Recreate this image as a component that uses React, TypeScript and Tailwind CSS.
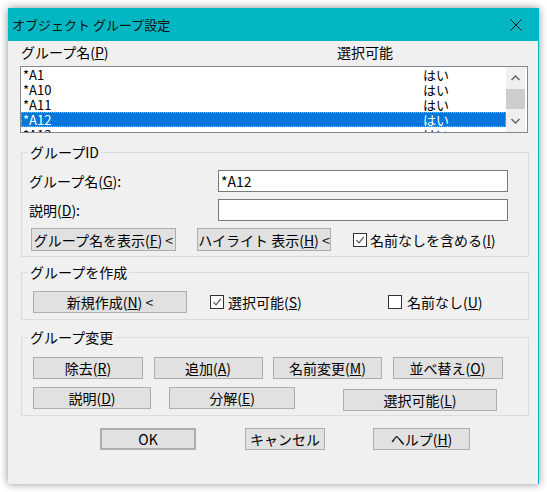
import type { ReactNode } from 'react';

const rows = [
  { name: '*A1', sel: 'はい' },
  { name: '*A10', sel: 'はい' },
  { name: '*A11', sel: 'はい' },
  { name: '*A12', sel: 'はい', active: true },
  { name: '*A13', sel: 'はい' },
];

function Btn({ children, className = '' }: { children: ReactNode; className?: string }) {
  return (
    <div
      className={`flex items-center justify-center whitespace-nowrap bg-[#e1e1e1] border border-[#adadad] text-[14px] leading-[16px] ${className}`}
    >
      {children}
    </div>
  );
}

function Check({ checked }: { checked: boolean }) {
  return (
    <div className="w-[14px] h-[14px] shrink-0 bg-white border border-[#333333] flex items-center justify-center">
      {checked && (
        <svg width="10" height="10" viewBox="0 0 10 10">
          <path d="M1.5 5.2 L4 7.8 L8.8 1.8" fill="none" stroke="#555555" strokeWidth="1.2" />
        </svg>
      )}
    </div>
  );
}

function Group({ title, children, className = '' }: { title: string; children: ReactNode; className?: string }) {
  return (
    <fieldset className={`ml-[1px] w-[508px] border border-[#dcdcdc] p-0 ${className}`}>
      <legend className="ml-[6px] px-[2px] text-[14px] leading-[16px]">{title}</legend>
      {children}
    </fieldset>
  );
}

export default function App() {
  return (
    <div className="w-[547px] h-[492px] bg-white pt-[8px] pl-[8px] font-['Noto_Sans_CJK_JP','Liberation_Sans',sans-serif] text-black">
      <div className="w-[531px] h-[476px] bg-[#f0f0f0] border-r border-[#00b7c3] shadow-[0_0_8px_rgba(0,0,0,0.45)] flex flex-col">
        {/* title bar */}
        <div className="h-[33px] shrink-0 bg-[#00b7c3] flex items-center pl-[4px] pr-[16px]">
          <span className="flex-1 text-[13px] leading-[16px] text-[#111]">オブジェクト グループ設定</span>
          <svg width="12" height="12" viewBox="0 0 12 12">
            <path d="M0.5 0.5 L11.5 11.5 M11.5 0.5 L0.5 11.5" stroke="#111" strokeWidth="1" />
          </svg>
        </div>

        <div className="pl-[12px] flex flex-col">
          {/* list header */}
          <div className="h-[25px] pt-[3px] flex text-[14px] leading-[16px]">
            <span className="w-[317px] pl-[1px]">
              グループ名(<u>P</u>)
            </span>
            <span>選択可能</span>
          </div>

          {/* list box */}
          <div className="w-[508px] h-[67px] border border-[#828790] bg-white flex overflow-hidden">
            <div className="w-[485px] flex flex-col overflow-hidden text-[13px] leading-[15px]">
              {rows.map((r) => (
                <div
                  key={r.name}
                  className={`h-[15px] shrink-0 flex ${
                    r.active
                      ? 'bg-[#0078d7] text-white outline outline-1 outline-dotted outline-[#f7a341] -outline-offset-1'
                      : ''
                  }`}
                >
                  <span className="w-[402px] pl-[2px]">{r.name}</span>
                  <span>{r.sel}</span>
                </div>
              ))}
            </div>
            <div className="w-[19px] bg-[#f0f0f0] flex flex-col">
              <div className="h-[22px] flex items-center justify-center">
                <svg width="9" height="6" viewBox="0 0 9 6">
                  <path d="M0.5 5 L4.5 1 L8.5 5" fill="none" stroke="#606060" strokeWidth="1.4" />
                </svg>
              </div>
              <div className="h-[20px] bg-[#cdcdcd]" />
              <div className="flex-1 flex items-end">
                <div className="h-[22px] w-full flex items-center justify-center">
                  <svg width="9" height="6" viewBox="0 0 9 6">
                    <path d="M0.5 1 L4.5 5 L8.5 1" fill="none" stroke="#606060" strokeWidth="1.4" />
                  </svg>
                </div>
              </div>
            </div>
            <div className="w-[2px] bg-white" />
          </div>

          {/* group ID */}
          <Group title="グループID" className="mt-[11px]">
            <div className="pt-[10px] pb-[5px] text-[14px] leading-[16px]">
              <div className="flex items-center h-[22px]">
                <span className="w-[196px] pl-[7px]">
                  グループ名(<u>G</u>):
                </span>
                <div className="w-[290px] h-[22px] bg-white border border-[#7a7a7a] pl-[2px] flex items-center">*A12</div>
              </div>
              <div className="flex items-center h-[22px] mt-[7px]">
                <span className="w-[196px] pl-[7px]">
                  説明(<u>D</u>):
                </span>
                <div className="w-[290px] h-[22px] bg-white border border-[#7a7a7a]" />
              </div>
              <div className="flex items-center mt-[7px]">
                <Btn className="ml-[9px] w-[145px] h-[23px]">
                  グループ名を表示(<u>F</u>) &lt;
                </Btn>
                <Btn className="ml-[21px] w-[134px] h-[23px]">
                  ハイライト 表示(<u>H</u>) &lt;
                </Btn>
                <div className="ml-[22px] flex items-center gap-[3px]">
                  <Check checked />
                  <span>
                    名前なしを含める(<u>I</u>)
                  </span>
                </div>
              </div>
            </div>
          </Group>

          {/* create group */}
          <Group title="グループを作成" className="mt-[7px]">
            <div className="pt-[11px] pb-[6px] flex items-center text-[14px] leading-[16px]">
              <Btn className="ml-[11px] w-[154px] h-[22px]">
                新規作成(<u>N</u>) &lt;
              </Btn>
              <div className="ml-[23px] w-[178px] flex items-center gap-[4px]">
                <Check checked />
                <span>
                  選択可能(<u>S</u>)
                </span>
              </div>
              <div className="flex items-center gap-[5px]">
                <Check checked={false} />
                <span>
                  名前なし(<u>U</u>)
                </span>
              </div>
            </div>
          </Group>

          {/* modify group */}
          <Group title="グループ変更" className="mt-[9px]">
            <div className="pt-[12px] pb-[4px]">
              <div className="flex gap-[10.5px] pl-[11px]">
                <Btn className="w-[110px] h-[22px]">
                  除去(<u>R</u>)
                </Btn>
                <Btn className="w-[109px] h-[22px]">
                  追加(<u>A</u>)
                </Btn>
                <Btn className="w-[109px] h-[22px]">
                  名前変更(<u>M</u>)
                </Btn>
                <Btn className="w-[110px] h-[22px]">
                  並べ替え(<u>O</u>)
                </Btn>
              </div>
              <div className="flex items-start pl-[11px] mt-[8px]">
                <Btn className="w-[118px] h-[22px]">
                  説明(<u>D</u>)
                </Btn>
                <Btn className="ml-[18px] w-[126px] h-[22px]">
                  分解(<u>E</u>)
                </Btn>
                <Btn className="ml-[48px] mt-[2px] w-[154px] h-[22px]">
                  選択可能(<u>L</u>)
                </Btn>
              </div>
            </div>
          </Group>

          {/* dialog buttons */}
          <div className="flex mt-[12px]">
            <Btn className="ml-[80px] w-[96px] h-[22px] border-2 border-[#0078d7]">OK</Btn>
            <Btn className="ml-[49px] w-[80px] h-[22px]">キャンセル</Btn>
            <Btn className="ml-[48px] w-[97px] h-[22px]">
              ヘルプ(<u>H</u>)
            </Btn>
          </div>
        </div>
      </div>
    </div>
  );
}
